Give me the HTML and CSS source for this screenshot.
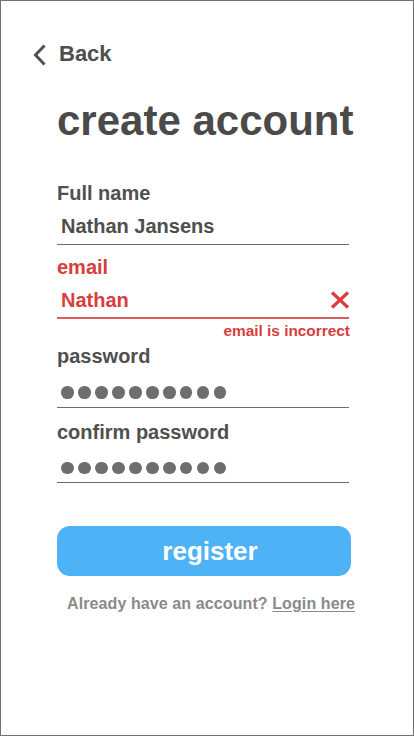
FILE: index.html
```html
<!DOCTYPE html>
<html lang="en">
<head>
<meta charset="utf-8">
<title>create account</title>
<link rel="stylesheet" href="styles.css">
</head>
<body>
<div class="screen">
  <a class="back" href="#">
    <svg class="back-icon" width="15" height="22" viewBox="0 0 15 22" aria-hidden="true">
      <path d="M12.5 1.5 L3.5 11 L12.5 20.5" fill="none" stroke="#505050" stroke-width="3"/>
    </svg>
    <span>Back</span>
  </a>

  <h1 class="title">create account</h1>

  <form class="form">
    <div class="field">
      <label class="label">Full name</label>
      <div class="control">
        <span class="value">Nathan Jansens</span>
      </div>
    </div>

    <div class="field field--error">
      <label class="label">email</label>
      <div class="control">
        <span class="value">Nathan</span>
        <svg class="clear-icon" width="20" height="18" viewBox="0 0 20 18" aria-hidden="true">
          <path d="M2 1.5 L18 16.5 M18 1.5 L2 16.5" stroke="#d93d3d" stroke-width="3.2" fill="none"/>
        </svg>
      </div>
      <div class="error">email is incorrect</div>
    </div>

    <div class="field">
      <label class="label">password</label>
      <div class="control control--dots" aria-label="password">
        <span class="dot"></span><span class="dot"></span><span class="dot"></span><span class="dot"></span><span class="dot"></span><span class="dot"></span><span class="dot"></span><span class="dot"></span><span class="dot"></span><span class="dot"></span>
      </div>
    </div>

    <div class="field field--confirm">
      <label class="label">confirm password</label>
      <div class="control control--dots" aria-label="confirm password">
        <span class="dot"></span><span class="dot"></span><span class="dot"></span><span class="dot"></span><span class="dot"></span><span class="dot"></span><span class="dot"></span><span class="dot"></span><span class="dot"></span><span class="dot"></span>
      </div>
    </div>

    <button class="register" type="button">register</button>

    <p class="login">Already have an account? <a href="#">Login here</a></p>
  </form>
</div>
</body>
</html>
```

FILE: styles.css
```css
* {
  box-sizing: border-box;
}

html, body {
  margin: 0;
  padding: 0;
  background: #ffffff;
}

body {
  font-family: "Liberation Sans", Arial, sans-serif;
  font-weight: bold;
}

.screen {
  width: 414px;
  height: 736px;
  border: 1px solid #707070;
  padding-top: 40px;
  display: flex;
  flex-direction: column;
}

.back {
  display: flex;
  align-items: center;
  gap: 12px;
  padding-left: 31px;
  height: 26px;
  font-size: 22px;
  line-height: 26px;
  color: #4e4e4e;
  text-decoration: none;
}

.back-icon {
  display: block;
  margin-top: 1px;
}

.title {
  margin: 30px 0 0 56px;
  font-size: 42px;
  line-height: 48px;
  font-weight: bold;
  color: #4a4a4a;
}

.form {
  margin: 36px 0 0 56px;
  width: 294px;
  display: flex;
  flex-direction: column;
  gap: 10px;
}

.field {
  width: 292px;
  display: flex;
  flex-direction: column;
}

.field--confirm {
  margin-top: 2px;
}

.label {
  font-size: 20px;
  line-height: 24px;
  color: #505050;
}

.control {
  display: flex;
  align-items: center;
  justify-content: space-between;
  padding: 9px 0 6px 4px;
  border-bottom: 1px solid #6b6b6b;
}

.value {
  font-size: 20px;
  line-height: 24px;
  color: #4e4e4e;
}

.field--error .label,
.field--error .value {
  color: #d93d3d;
}

.field--error .control {
  padding-bottom: 5px;
  border-bottom: 2px solid #e35a5a;
}

.clear-icon {
  display: block;
  margin-right: -1px;
}

.error {
  margin-top: 3px;
  margin-bottom: -6px;
  align-self: flex-end;
  margin-right: -1px;
  font-size: 15.4px;
  line-height: 18px;
  color: #d93d3d;
}

.control--dots {
  justify-content: flex-start;
  gap: 4.4px;
  padding: 18px 0 8px 4px;
}

.dot {
  width: 12.6px;
  height: 12.6px;
  border-radius: 50%;
  background: #6e6e6e;
}

.register {
  margin-top: 33px;
  width: 294px;
  height: 50px;
  border: none;
  border-radius: 13px;
  background: #4db3f6;
  color: #ffffff;
  font-family: "Liberation Sans", Arial, sans-serif;
  font-weight: bold;
  font-size: 26px;
  line-height: 50px;
  padding: 0 0 2px 12px;
  cursor: pointer;
}

.login {
  margin: 8px 0 0 10px;
  font-size: 16px;
  line-height: 20px;
  letter-spacing: 0.1px;
  color: #8a8a8a;
  white-space: nowrap;
}

.login a {
  color: #8a8a8a;
  text-decoration: underline;
  text-underline-offset: 2px;
}
```
